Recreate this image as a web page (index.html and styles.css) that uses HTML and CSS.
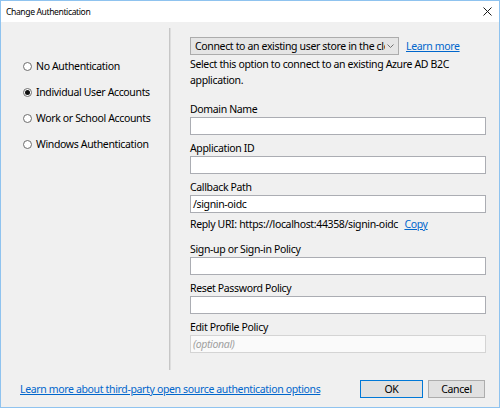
FILE: index.html
```html
<!DOCTYPE html>
<html>
<head>
<meta charset="utf-8">
<link rel="stylesheet" href="styles.css">
</head>
<body>
<div class="window">
  <div class="titlebar">
    <span class="title">Change Authentication</span>
    <svg class="close" width="9" height="9" viewBox="0 0 9 9"><path d="M0.5 0.5 L8.5 8.5 M8.5 0.5 L0.5 8.5" stroke="#1a1a1a" stroke-width="1" fill="none"/></svg>
  </div>
  <div class="body">
    <div class="main">
      <div class="auth-list">
        <div class="radio-row"><span class="radio"></span>No Authentication</div>
        <div class="radio-row"><span class="radio checked"></span>Individual User Accounts</div>
        <div class="radio-row"><span class="radio"></span>Work or School Accounts</div>
        <div class="radio-row"><span class="radio"></span>Windows Authentication</div>
      </div>
      <div class="divider"></div>
      <div class="config">
        <div class="select-row">
          <div class="select">
            <span class="select-text">Connect to an existing user store in the cloud</span>
            <svg class="chev" width="7" height="4" viewBox="0 0 7 4"><path d="M0.5 0.5 L3.5 3.5 L6.5 0.5" stroke="#707070" stroke-width="1" fill="none"/></svg>
          </div>
          <a class="link">Learn more</a>
        </div>
        <p class="desc">Select this option to connect to an existing Azure AD B2C<br>application.</p>
        <div class="field first">
          <div class="label">Domain Name</div>
          <div class="input"></div>
        </div>
        <div class="field">
          <div class="label">Application ID</div>
          <div class="input"></div>
        </div>
        <div class="field">
          <div class="label">Callback Path</div>
          <div class="input">/signin-oidc</div>
          <div class="reply">Reply URI: https://localhost:44358/signin-oidc <a class="link copy">Copy</a></div>
        </div>
        <div class="field after-reply">
          <div class="label">Sign-up or Sign-in Policy</div>
          <div class="input"></div>
        </div>
        <div class="field">
          <div class="label">Reset Password Policy</div>
          <div class="input"></div>
        </div>
        <div class="field">
          <div class="label">Edit Profile Policy</div>
          <div class="input optional"><span class="placeholder">(optional)</span></div>
        </div>
      </div>
    </div>
    <div class="footer">
      <a class="link">Learn more about third-party open source authentication options</a>
      <div class="buttons">
        <div class="btn primary">OK</div>
        <div class="btn cancel">Cancel</div>
      </div>
    </div>
  </div>
</div>
</body>
</html>
```
FILE: styles.css
```css
* { box-sizing: border-box; }
html, body { margin: 0; padding: 0; }
body {
  font-family: "Noto Sans", "Open Sans", sans-serif;
  font-size: 10.5px;
  letter-spacing: -0.35px;
  color: #000;
  background: #fff;
}
.window {
  width: 500px;
  height: 408px;
  border: 1px solid #8fc3ef;
  display: flex;
  flex-direction: column;
}
.titlebar {
  height: 21px;
  background: #fff;
  display: flex;
  align-items: center;
  justify-content: space-between;
  padding: 0 7px 0 5px;
}
.title {
  font-size: 8.6px;
  letter-spacing: -0.4px;
  color: #000;
}
.close { display: block; }
.body {
  flex: 1;
  background: #f0f0f0;
  display: flex;
  flex-direction: column;
}
.main {
  height: 348px;
  display: flex;
}
.auth-list {
  width: 168px;
  padding: 36px 0 0 22px;
  display: flex;
  flex-direction: column;
  gap: 10px;
}
.radio-row {
  height: 16px;
  line-height: 16px;
  display: flex;
  align-items: center;
}
.radio {
  width: 9px;
  height: 9px;
  border: 1px solid #6d6d6d;
  border-radius: 50%;
  background: #fff;
  margin-right: 4px;
  display: flex;
  align-items: center;
  justify-content: center;
}
.radio.checked::after {
  content: "";
  width: 5px;
  height: 5px;
  border-radius: 50%;
  background: #111;
}
.divider {
  width: 2px;
  margin-top: 6px;
  border-left: 1px solid #c6c6c6;
  border-right: 1px solid #dedede;
}
.config {
  width: 315px;
  padding: 15px 0 0 19px;
  display: flex;
  flex-direction: column;
}
.select-row {
  display: flex;
  align-items: center;
  gap: 7px;
  height: 18px;
}
.select {
  width: 209px;
  height: 18px;
  border: 1px solid #acacac;
  background: #e5e5e5;
  display: flex;
  align-items: center;
  padding-left: 4px;
}
.select-text {
  width: 190px;
  overflow: hidden;
  white-space: nowrap;
  line-height: 16px;
}
.chev { margin-left: 2px; display: block; }
.link {
  color: #0066cc;
  text-decoration: underline;
  cursor: pointer;
}
.desc {
  margin: 1px 0 0;
  line-height: 16px;
}
.field {
  margin-top: 5px;
  display: flex;
  flex-direction: column;
}
.field.first { margin-top: 13px; }
.field.after-reply { margin-top: 9px; }
.label {
  height: 16px;
  line-height: 16px;
}
.input {
  width: 296px;
  height: 18px;
  border: 1px solid #abadb3;
  background: #fff;
  padding-left: 2px;
  line-height: 16px;
}
.input.optional {
  background: #fafafa;
  border-color: #d4d4d4;
}
.placeholder {
  color: #a0a0a0;
  font-style: italic;
}
.reply {
  margin-top: 3px;
  height: 16px;
  line-height: 16px;
  white-space: nowrap;
}
.copy { margin-left: 4px; }
.footer {
  flex: 1;
  display: flex;
  align-items: center;
  justify-content: space-between;
  padding: 0 14px 0 19px;
}
.buttons {
  display: flex;
  gap: 5px;
}
.btn {
  height: 18px;
  line-height: 16px;
  text-align: center;
  background: #e1e1e1;
  border: 1px solid #adadad;
}
.btn.primary { width: 63px; border-color: #0078d7; }
.btn.cancel { width: 57px; }
```
